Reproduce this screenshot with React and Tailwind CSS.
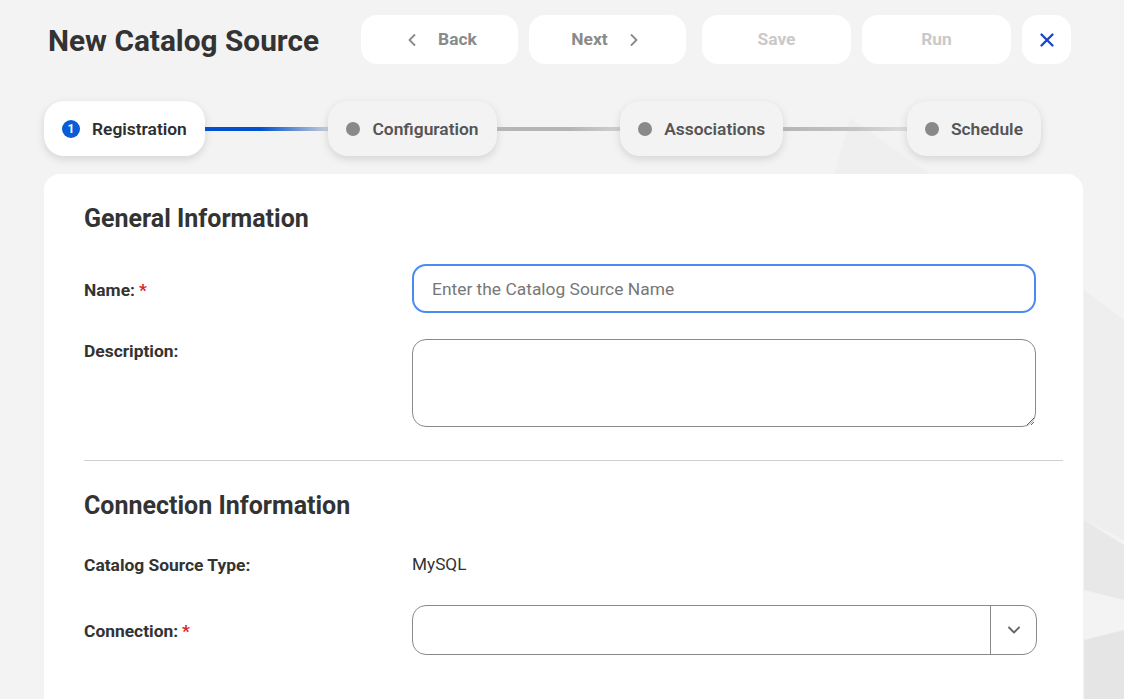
import React from 'react';
import {ChevronLeft, ChevronRight, ChevronDown, X} from "lucide-react";

const steps = [
    {label: "Registration", active: true},
    {label: "Configuration"},
    {label: "Associations"},
    {label: "Schedule"},
];

const lines = [
    "bg-[linear-gradient(90deg,#0050d0_0%,#0050d0_45%,#c9cfd8_100%)]",
    "bg-[linear-gradient(90deg,#b4b5b7_0%,#b4b5b7_60%,#cfd0d1_100%)]",
    "bg-[linear-gradient(90deg,#b4b5b7_0%,#c4c5c6_60%,#dcdcdc_100%)]",
];

const Step = ({step, num}) => (
    <div className={"flex h-[55px] items-center gap-3 rounded-[20px] px-[18px] shadow-[0_3px_8px_rgba(0,0,0,0.13)] " + (step.active ? "bg-white" : "bg-[#f3f3f3]")}>
        {step.active ?
            <div className="flex h-[18px] w-[18px] items-center justify-center rounded-full bg-[#0a5bd8] text-[12px] font-bold text-white">{num}</div> :
            <div className="h-[14px] w-[14px] rounded-full bg-[#88898b]"/>}
        <span className={"pt-[2px] text-[17.4px] font-semibold " + (step.active ? "text-[#2e2e2e]" : "text-[#555]")}>{step.label}</span>
    </div>
);

const Label = ({children, required, className = ""}) => (
    <div className={"w-[328px] shrink-0 text-[17.4px] font-bold text-[#333] " + className}>
        {children}{required && <span className="ml-1 text-[#e0202a]">*</span>}
    </div>
);

const App = () => {
    return (
        <div className="relative h-[699px] w-[1124px] overflow-hidden bg-[#f3f3f3] font-['Roboto',sans-serif]">
            {/* faint background shapes */}
            <svg className="absolute inset-0" width="1124" height="699" viewBox="0 0 1124 699">
                <polygon points="850,118 1010,230 800,300" fill="#efefef"/>
                <polygon points="1084,290 1124,320 1124,540 1084,520" fill="#eeeeee"/>
                <polygon points="1084,520 1124,545 1124,600 1084,590" fill="#e8e8e8"/>
                <polygon points="1084,640 1124,630 1124,699 1084,699" fill="#e5e5e5"/>
            </svg>

            <div className="relative pl-[44px] pt-[15px]">
                <div className="flex items-center">
                    <h1 className="w-[317px] pl-1 pt-[3px] text-[29.8px] font-bold text-[#333]">New Catalog Source</h1>
                    <div className="flex items-center">
                        <button className="flex h-[49px] w-[157px] items-center justify-center gap-4 rounded-2xl bg-white text-[17.4px] font-bold text-[#8a8a8a]">
                            <ChevronLeft size={20} strokeWidth={2.2}/>Back
                        </button>
                        <button className="ml-[11px] flex h-[49px] w-[157px] items-center justify-center gap-4 rounded-2xl bg-white text-[17.4px] font-bold text-[#8a8a8a]">
                            Next<ChevronRight size={20} strokeWidth={2.2}/>
                        </button>
                        <button className="ml-4 h-[49px] w-[149px] rounded-2xl bg-white text-[17.4px] font-bold text-[#c9c9c9]">Save</button>
                        <button className="ml-[11px] h-[49px] w-[149px] rounded-2xl bg-white text-[17.4px] font-bold text-[#c9c9c9]">Run</button>
                        <button className="ml-[11px] flex h-[49px] w-[49px] items-center justify-center rounded-2xl bg-white text-[#1545c9]">
                            <X size={22} strokeWidth={2.5}/>
                        </button>
                    </div>
                </div>

                <div className="mt-[37px] flex w-[997px] items-center">
                    {steps.map((step, i) => (
                        <React.Fragment key={i}>
                            <Step step={step} num={i + 1}/>
                            {i < lines.length && <div className={"h-1 flex-1 " + lines[i]}/>}
                        </React.Fragment>
                    ))}
                </div>

                <div className="mt-[18px] h-[540px] w-[1039px] rounded-t-2xl bg-white pl-10 pr-5 pt-[29px]">
                    <h2 className="text-[25px] leading-8 font-bold text-[#333]">General Information</h2>

                    <div className="mt-[29px] flex items-center">
                        <Label required className="pt-[3px]">Name:</Label>
                        <input className="h-[49px] w-[624px] rounded-[14px] border-2 border-[#4a8af4] px-[18px] text-[17.4px] text-[#333] outline-none placeholder:text-[#777]"
                               placeholder="Enter the Catalog Source Name"/>
                    </div>

                    <div className="mt-[26px] flex items-start">
                        <div className="leading-6"><Label>Description:</Label></div>
                        <textarea className="h-[88px] w-[624px] rounded-[14px] border border-[#8a8a8a] px-4 py-2 text-[16px] outline-none"/>
                    </div>

                    <div className="mt-[33px] h-px bg-[#d0d0d0]"/>

                    <h2 className="mt-[29px] text-[25px] leading-8 font-bold text-[#333]">Connection Information</h2>

                    <div className="mt-[31px] flex h-6 items-center">
                        <Label>Catalog Source Type:</Label>
                        <span className="text-[17.2px] text-[#333]">MySQL</span>
                    </div>

                    <div className="mt-[28px] flex items-center">
                        <Label required className="pt-[2px]">Connection:</Label>
                        <div className="flex h-[50px] w-[625px] items-center rounded-[14px] border border-[#8a8a8a]">
                            <div className="flex-1"/>
                            <div className="flex h-full w-[46px] items-center justify-center border-l border-[#8a8a8a] text-[#666]">
                                <ChevronDown size={20} strokeWidth={2.2}/>
                            </div>
                        </div>
                    </div>
                </div>
            </div>
        </div>
    );
}

export default App;
